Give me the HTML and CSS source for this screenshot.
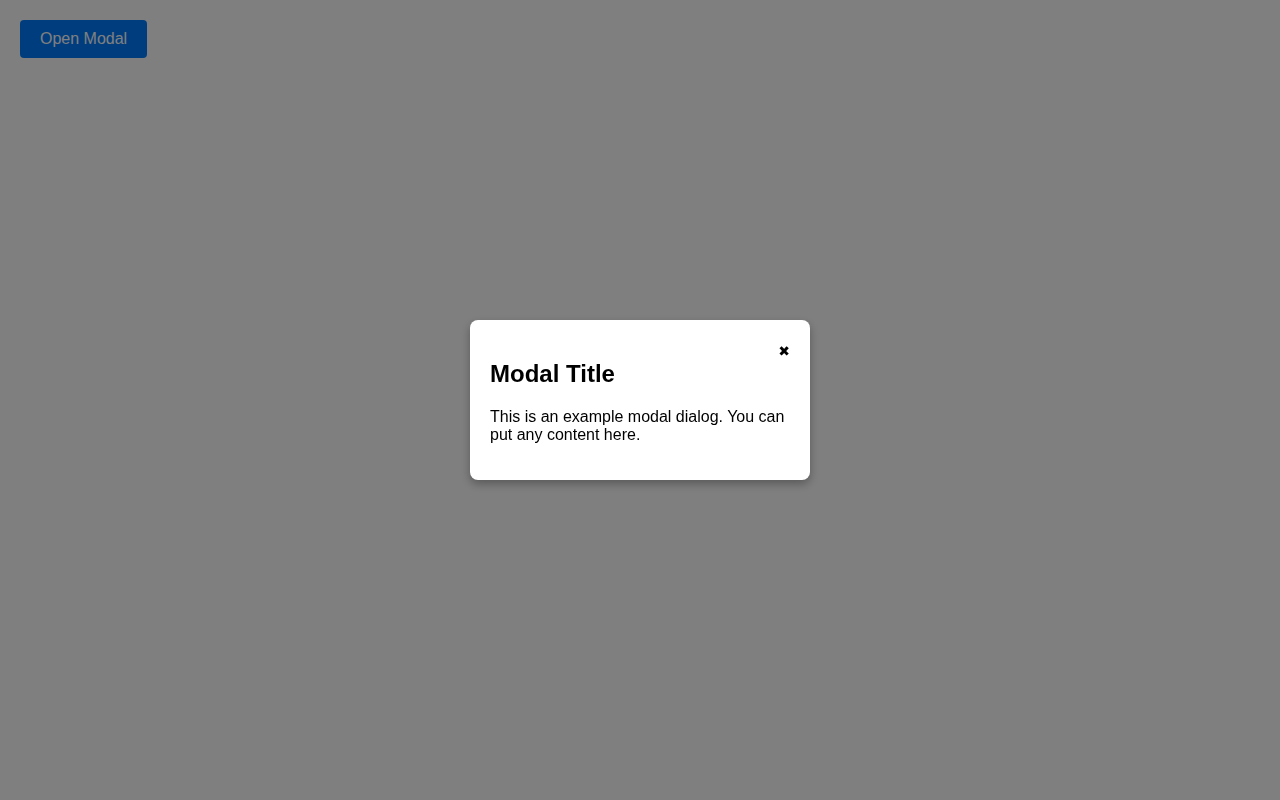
FILE: index.html
```html
<!DOCTYPE html>
<html>
<head>
<meta charset="utf-8">
<link rel="stylesheet" href="styles.css">
</head>
<body>
<button class="open-btn">Open Modal</button>
<div class="overlay">
  <div class="modal">
    <span class="close">&#x2716;</span>
    <h2 class="modal-title">Modal Title</h2>
    <p class="modal-text">This is an example modal dialog. You can put any content here.</p>
  </div>
</div>
</body>
</html>
```
FILE: styles.css
```css
html, body {
  margin: 0;
  padding: 0;
}
body {
  padding: 20px;
  font-family: "Liberation Sans", Arial, sans-serif;
  background: #fff;
}
.open-btn {
  font-family: "Liberation Sans", Arial, sans-serif;
  font-size: 16px;
  line-height: 18px;
  padding: 10px 20px;
  background: #007bff;
  color: #fff;
  border: none;
  border-radius: 4px;
  cursor: pointer;
}
.overlay {
  position: fixed;
  inset: 0;
  background: rgba(0, 0, 0, 0.5);
  display: flex;
  align-items: center;
  justify-content: center;
}
.modal {
  background: #fff;
  width: 300px;
  padding: 20px;
  border-radius: 8px;
  box-shadow: 0 4px 10px rgba(0, 0, 0, 0.3);
}
.close {
  float: right;
  font-family: "DejaVu Sans", sans-serif;
  font-size: 14px;
  line-height: 22px;
  cursor: pointer;
}
.modal-title {
  font-size: 24px;
  margin: 20px 0;
}
.modal-text {
  font-size: 16px;
  margin: 0 0 16px;
}
```
